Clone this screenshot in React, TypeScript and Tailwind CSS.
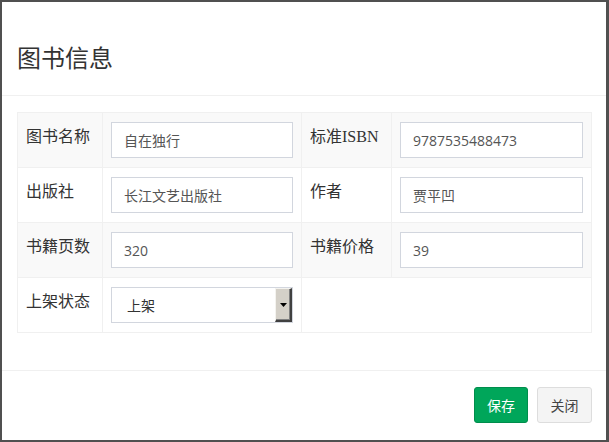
const rows = [
  [
    { label: '图书名称', value: '自在独行' },
    { label: 'ISBN', value: '9787535488473' },
  ],
  [
    { label: '出版社', value: '长江文艺出版社' },
    { label: '作者', value: '贾平凹' },
  ],
  [
    { label: '书籍页数', value: '320' },
    { label: '书籍价格', value: '39' },
  ],
];

function Label({ text }: { text: string }) {
  if (text === 'ISBN') {
    return (
      <>
        标准<span className="font-['Liberation_Serif',serif]">ISBN</span>
      </>
    );
  }
  return <>{text}</>;
}

function TextInput({ value }: { value: string }) {
  return (
    <div className="h-[36px] border border-[#d2d6de] bg-white pl-[12px] flex items-center text-[14px] text-[#555] font-['Open_Sans','Noto_Sans_CJK_SC',sans-serif]">
      {value}
    </div>
  );
}

function FakeSelect({ value }: { value: string }) {
  return (
    <div className="h-[36px] border border-[#d2d6de] bg-white flex items-stretch text-[14px] text-[#333] font-['Noto_Sans_CJK_SC',sans-serif]">
      <div className="flex-1 flex items-center pl-[15px]">{value}</div>
      <div className="w-[17px] bg-[#d4d0c8] border-t border-l border-t-[#f4f3ef] border-l-[#f4f3ef] border-r-2 border-b-2 border-r-[#404040] border-b-[#404040] shadow-[inset_-1px_-1px_0_#808080] flex items-center justify-center">
        <svg width="7" height="4" viewBox="0 0 7 4">
          <polygon points="0,0 7,0 3.5,4" fill="#000" />
        </svg>
      </div>
    </div>
  );
}

export default function App() {
  return (
    <div className="w-[609px] h-[442px] bg-white border-t-2 border-l-2 border-b-2 border-r-[3px] border-[#505050] flex flex-col text-[#333] font-['Noto_Sans_CJK_SC',sans-serif]">
      <div className="h-[94px] shrink-0 border-b border-[#f0f0f0] pl-[15px] pt-[41px]">
        <h4 className="text-[24px] leading-[27px] text-[#333]">图书信息</h4>
      </div>

      <div className="h-[275px] shrink-0 border-b border-[#f0f0f0] pl-[15px] pt-[16px]">
        <div className="w-[575px] border-t border-l border-[#f0f0f0]">
          {rows.map((row, i) => (
            <div
              key={i}
              className={`flex border-b border-[#f0f0f0] ${i % 2 === 0 ? 'bg-[#f9f9f9]' : 'bg-white'}`}
            >
              <div className="w-[85px] border-r border-[#f0f0f0] px-[8px] pt-[10px] text-[16px] leading-[24px]">
                <Label text={row[0].label} />
              </div>
              <div className="w-[199px] border-r border-[#f0f0f0] px-[8px] py-[9px]">
                <TextInput value={row[0].value} />
              </div>
              <div className="w-[90px] border-r border-[#f0f0f0] px-[8px] pt-[10px] text-[16px] leading-[24px]">
                <Label text={row[1].label} />
              </div>
              <div className="w-[200px] border-r border-[#f0f0f0] px-[8px] py-[9px]">
                <TextInput value={row[1].value} />
              </div>
            </div>
          ))}
          <div className="flex border-b border-[#f0f0f0] bg-white">
            <div className="w-[85px] border-r border-[#f0f0f0] px-[8px] pt-[10px] text-[16px] leading-[24px]">
              上架状态
            </div>
            <div className="w-[199px] border-r border-[#f0f0f0] px-[8px] py-[9px]">
              <FakeSelect value="上架" />
            </div>
            <div className="w-[290px] border-r border-[#f0f0f0]" />
          </div>
        </div>
      </div>

      <div className="flex-1 flex justify-end items-start gap-[9px] pt-[16px] pr-[14px]">
        <button className="w-[54px] h-[36px] rounded-[3px] bg-[#00a65a] border border-[#008d4c] text-white text-[14px]">
          保存
        </button>
        <button className="w-[55px] h-[36px] rounded-[3px] bg-[#f4f4f4] border border-[#ddd] text-[#444] text-[14px]">
          关闭
        </button>
      </div>
    </div>
  );
}
